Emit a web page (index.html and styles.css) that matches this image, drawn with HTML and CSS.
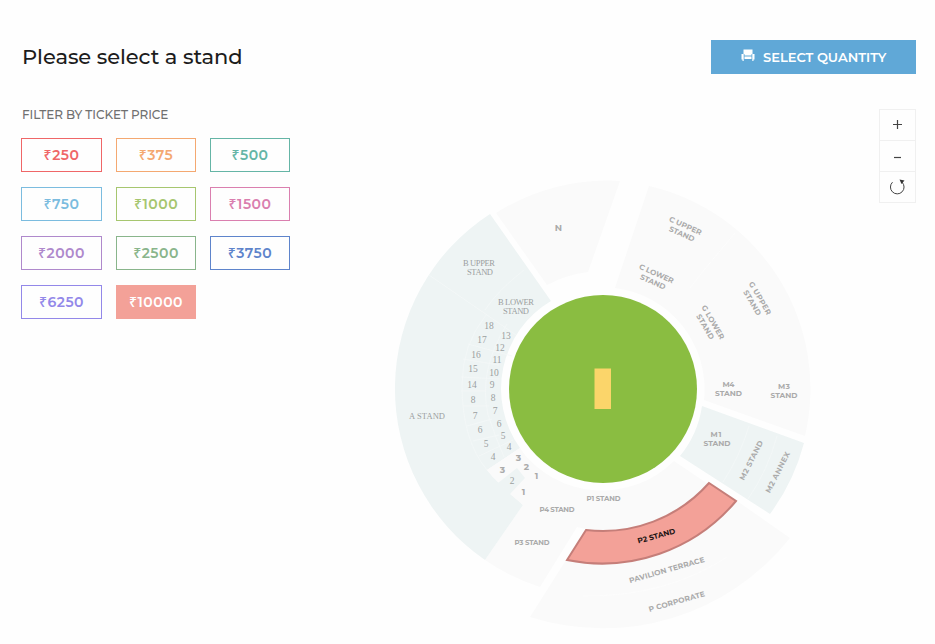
FILE: index.html
```
<!DOCTYPE html>
<html lang="en">
<head>
<meta charset="utf-8">
<title>Please select a stand</title>
<link rel="stylesheet" href="styles.css">
</head>
<body>
<main class="page">
  <header class="header">
    <h1 class="title">Please select a stand</h1>
    <button class="cta">
      <svg class="seat" viewBox="0 0 14 13"><path d="M2.500 0.500h9v4.500H10.500v1.500H3.500V5H2.500zM3.500 7.500h7v2.500h-7zM.5 5H2.700v7H1.500V10.500H.5zM11.300 5h2.200v5.500h-1V12h-1.200z"/></svg>
      <span>SELECT QUANTITY</span>
    </button>
  </header>
  <div class="content">
    <section class="filter">
      <h2 class="filter-title">FILTER BY TICKET PRICE</h2>
      <div class="prices">
        <button class="price red"><span class="rupee">₹</span>250</button>
        <button class="price orange"><span class="rupee">₹</span>375</button>
        <button class="price teal"><span class="rupee">₹</span>500</button>
        <button class="price sky"><span class="rupee">₹</span>750</button>
        <button class="price lime"><span class="rupee">₹</span>1000</button>
        <button class="price pink"><span class="rupee">₹</span>1500</button>
        <button class="price purple"><span class="rupee">₹</span>2000</button>
        <button class="price green"><span class="rupee">₹</span>2500</button>
        <button class="price blue"><span class="rupee">₹</span>3750</button>
        <button class="price violet"><span class="rupee">₹</span>6250</button>
        <button class="price selected"><span class="rupee">₹</span>10000</button>
      </div>
    </section>
    <svg class="map" viewBox="380 170 450 474">
      <g class="off">
        <path d="M496 213A208 208 0 0 1 620 181L588 272A118 118 0 0 0 547 285Z"/>
        <path d="M649 186A208 208 0 0 1 805 436L704 400A102 102 0 0 0 615 288Z"/>
        <path d="M520 449L487 470L523 505L485 560A208 208 0 0 0 540 587L577 527L586 529A141 141 0 0 0 708 484L674 461A102 102 0 0 1 520 449Z"/>
        <path d="M566 560A175 175 0 0 0 737 501L790 538A239 239 0 0 1 530 617Z"/>
      </g>
      <g class="open">
        <path d="M490 214L551 301A102 102 0 0 0 520 448L487 470L498 482L523 505L485 560A208 208 0 0 1 490 214Z"/>
        <path d="M702 406L804 443A208 208 0 0 1 770 514L680 456A102 102 0 0 0 702 406Z"/>
      </g>
      <path class="off" d="M520 448L487 470Q492 477 498 482L517 468L525 478L510 494L523 505L545 485Z"/>
      <g class="lines">
        <path d="M429 275L516 335M524 270Q498 290 485 310M486 315Q462 345 462 385Q462 440 487 470M507 324Q478 370 488 415Q495 436 504 457M468 344L512 356M463 359L499 365M461 377L500 379M461 391L486 391M463 406L489 406M467 426L492 419M473 441L499 435M479 456L513 440M749 426Q740 456 723 482M777 436Q768 470 748 499"/>
      </g>
      <path class="off-line" d="M735 233L704 270L690 288M583 596Q666 597 727 557"/>
      <circle class="field" cx="603" cy="389" r="94"/>
      <path class="pitch" d="M594.500 368.500h16.500v40.500h-16.500z"/>
      <path class="chosen" d="M586 530A142 142 0 0 0 709 483L736 501A175 175 0 0 1 567 560Z"/>
      <path class="open" d="M498 483L517 468L525 478L510 494Z"/>
      <g class="serif">
        <text x="479" y="266" textLength="32">B UPPER</text><text x="480" y="275" textLength="26">STAND</text>
        <text x="516" y="305" textLength="36">B LOWER</text><text x="516" y="314" textLength="26">STAND</text>
        <text x="427" y="419" textLength="36">A STAND</text>
      </g>
      <g class="serif num">
        <text x="489" y="329">18</text><text x="482" y="343">17</text><text x="476" y="358">16</text><text x="473" y="372">15</text><text x="472" y="388">14</text><text x="473" y="403">8</text><text x="475" y="419">7</text><text x="480" y="433">6</text><text x="486" y="447">5</text><text x="493" y="460">4</text>
        <text x="506" y="339">13</text><text x="500" y="351">12</text><text x="497" y="363">11</text><text x="494" y="376">10</text><text x="492" y="388">9</text><text x="493" y="401">8</text><text x="495" y="414">7</text><text x="499" y="427">6</text><text x="503" y="439">5</text><text x="509" y="450">4</text><text x="512" y="484">2</text>
      </g>
      <g class="label">
        <text x="518.500" y="461" class="digit">3</text><text x="502.500" y="473" class="digit">3</text><text x="526.500" y="470" class="digit">2</text><text x="536.500" y="479" class="digit">1</text><text x="523.500" y="495" class="digit">1</text>
        <text x="558.500" y="231" class="digit">N</text>
        <g transform="translate(684 229) rotate(24)"><text y="-1" textLength="35">C UPPER</text><text y="8" textLength="27">STAND</text></g>
        <g transform="translate(655 277) rotate(24)"><text y="-1" textLength="37">C LOWER</text><text y="8" textLength="27">STAND</text></g>
        <g transform="translate(757 300) rotate(60)"><text y="-1" textLength="37">G UPPER</text><text y="8" textLength="28">STAND</text></g>
        <g transform="translate(710 324) rotate(60)"><text y="-1" textLength="38">G LOWER</text><text y="8" textLength="28">STAND</text></g>
        <text x="728.500" y="386.500" textLength="12">M4</text><text x="728.500" y="395.500" textLength="27">STAND</text>
        <text x="784" y="389" textLength="12">M3</text><text x="784" y="398" textLength="27">STAND</text>
        <text x="716" y="436.500" textLength="11">M1</text><text x="717" y="445.500" textLength="27">STAND</text>
        <text transform="translate(753.500 461.500) rotate(-63)" textLength="43">M2 STAND</text>
        <text transform="translate(780 473.500) rotate(-63)" textLength="45">M2 ANNEX</text>
        <g class="small"><text x="603.500" y="501" textLength="34">P1 STAND</text><text x="557" y="512" textLength="35">P4 STAND</text><text x="532" y="545" textLength="35">P3 STAND</text></g>
        <text class="active" transform="translate(657 538.500) rotate(-15)" textLength="39">P2 STAND</text>
        <text transform="translate(667.500 572.500) rotate(-16)" textLength="78">PAVILION TERRACE</text>
        <text transform="translate(677.500 604) rotate(-16)" textLength="58">P CORPORATE</text>
      </g>
    </svg>
    <div class="controls">
      <button class="control" aria-label="Zoom in"><svg viewBox="0 0 20 20"><path d="M5 9.500h9M9.500 5v9"/></svg></button>
      <button class="control" aria-label="Zoom out"><svg viewBox="0 0 20 20"><path d="M6 11.500h7"/></svg></button>
      <button class="control" aria-label="Reset"><svg viewBox="0 0 20 20"><path class="thin" d="M4.500 5.200A6.800 6.800 0 1 0 14 5.200"/><path class="head" d="M11.500 2.500l5 1-3 3.500z"/></svg></button>
    </div>
  </div>
</main>
</body>
</html>
```
FILE: styles.css
```
* { box-sizing: border-box; }
body { margin: 0; background: #fefefe; font-family: Montserrat, Inter, "Liberation Sans", sans-serif; }
button { font-family: inherit; padding: 0; margin: 0; background: none; border: 0; }
.page { height: 644px; padding: 40px 19px 0 21px; overflow: hidden; }
.header { display: flex; justify-content: space-between; height: 34px; }
.title { margin: 0; padding-left: 1px; font-size: 21px; line-height: 34px; font-weight: 500; letter-spacing: -.06px; color: #1c1c1c; }
.cta { display: flex; align-items: center; width: 205px; height: 34px; padding-left: 30px; background: #60a8d7; color: #fff; font-size: 13px; font-weight: 600; letter-spacing: 0; white-space: nowrap; }
.seat { width: 14px; height: 13px; margin: -3px 8px 0 0; fill: #fff; }
.content { display: flex; }
.filter { width: 269px; padding-top: 33px; }
.filter-title { margin: 0; padding-left: 1px; font-size: 12px; font-weight: 500; line-height: 16px; letter-spacing: -.07px; color: #707070; white-space: nowrap; }
.prices { display: grid; grid-template-columns: 81px 80px 80px; column-gap: 14px; row-gap: 15px; margin-top: 15px; }
.price { height: 34px; border: 1px solid currentColor; font-size: 14px; font-weight: 600; letter-spacing: .5px; }
.rupee { font-family: "Noto Sans", "Open Sans", sans-serif; font-weight: 500; font-size: 14px; line-height: 1; }
.red { color: #ef6667; }
.orange { color: #f4a871; }
.teal { color: #65b5a6; }
.sky { color: #7bbcdf; }
.lime { color: #a6c66f; }
.pink { color: #da7faf; }
.purple { color: #af89cc; }
.green { color: #89b58b; }
.blue { color: #5e84cb; }
.violet { color: #9388e9; }
.selected { color: #fff; background: #f3a198; border-color: #f3a198; }
.map { width: 450px; height: 474px; margin: 96px 0 0 90px; flex: none; }
.controls { width: 37px; margin: 35px 0 0 49px; flex: none; }
.control { display: flex; align-items: center; justify-content: center; width: 37px; height: 32px; border: 1px solid #f0f0f0; }
.control + .control { margin-top: -1px; }
.control svg { width: 20px; height: 20px; fill: none; stroke: #444; stroke-width: 1.2; }
.control .thin { stroke-width: 1; }
.control .head { fill: #333; stroke: none; }
.off { fill: #fafafa; }
.open { fill: #eef4f4; }
.lines { fill: none; stroke: #f4f8f8; stroke-width: .8; }
.off-line { fill: none; stroke: #fdfdfd; stroke-width: .8; }
.field { fill: #8abd41; }
.pitch { fill: #fbd56a; }
.chosen { fill: #f3a198; stroke: #c57e79; stroke-width: 2; }
.map text { text-anchor: middle; }
.serif { font-family: "Liberation Serif", serif; font-size: 8.5px; fill: #9b9f9f; }
.num { font-size: 9.5px; }
.label { font-size: 7.5px; font-weight: 700; fill: #aaa; }
.small { font-size: 7px; }
.digit { font-size: 9px; }
.label .active { fill: #201413; }
```
